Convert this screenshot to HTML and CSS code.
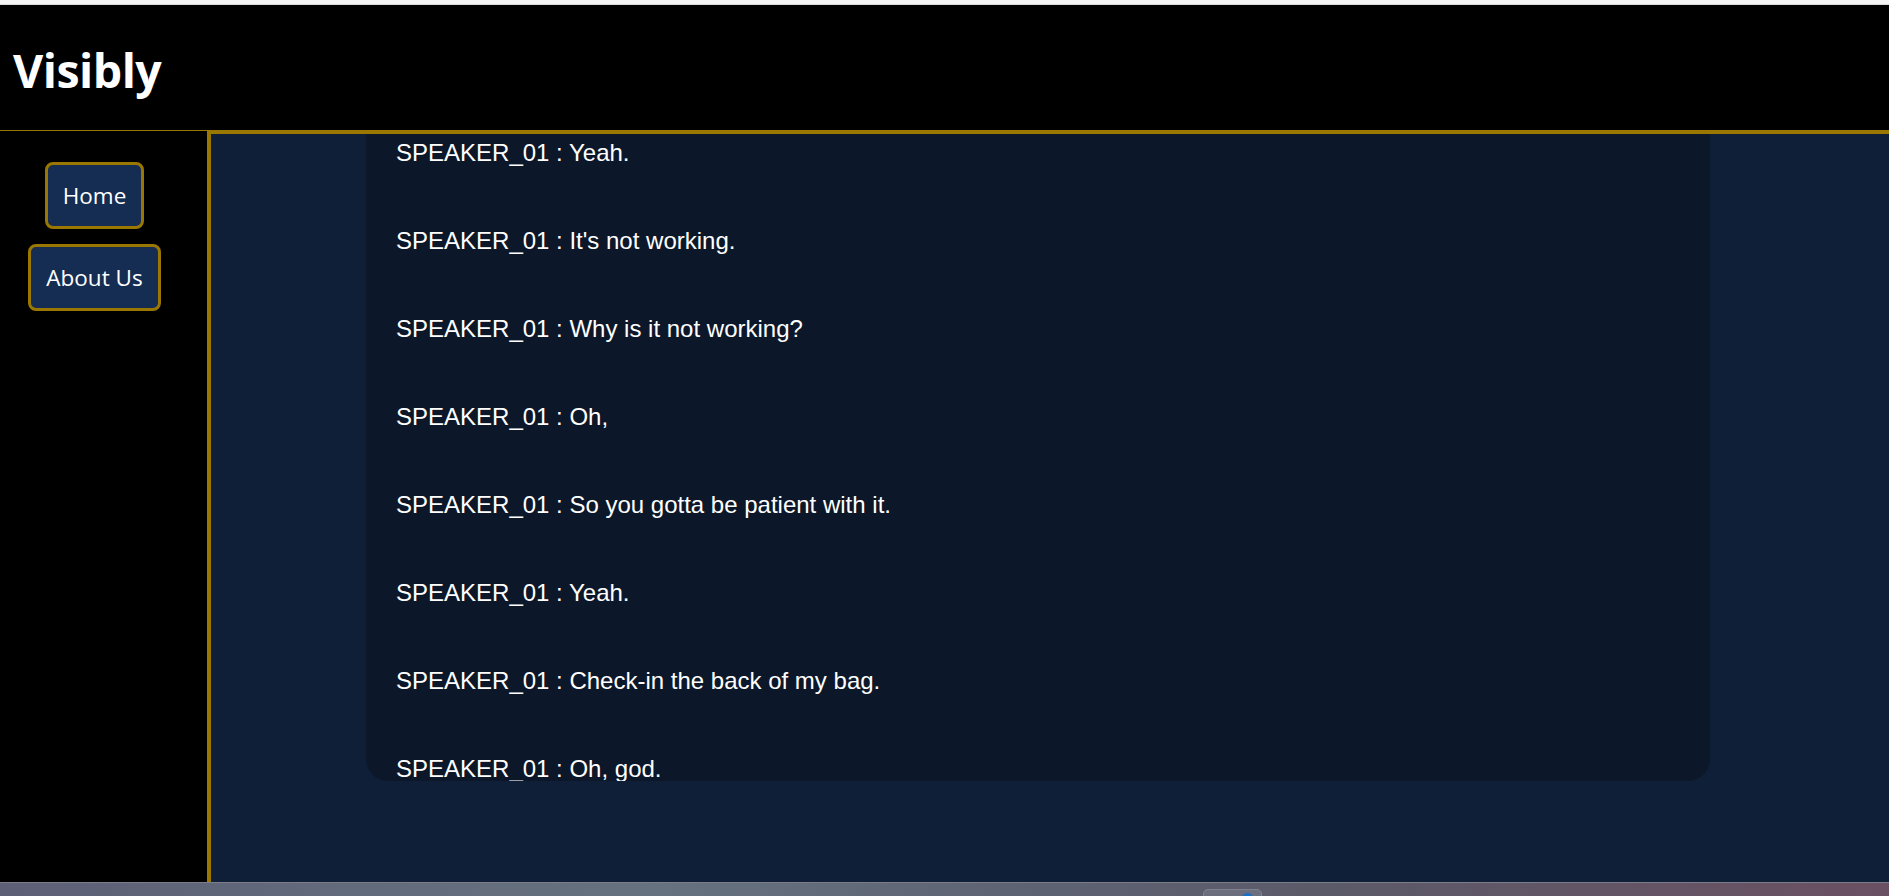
FILE: index.html
```html
<!DOCTYPE html>
<html lang="en">
<head>
<meta charset="utf-8">
<title>Visibly</title>
<link rel="stylesheet" href="styles.css">
</head>
<body>
<div class="topstrip"></div>
<header class="header">
  <h1 class="brand">Visibly</h1>
</header>
<div class="layout">
  <nav class="sidebar">
    <button class="nav-btn">Home</button>
    <button class="nav-btn">About Us</button>
  </nav>
  <main class="main">
    <section class="transcript">
      <p class="line">SPEAKER_01 : Yeah.</p>
      <p class="line">SPEAKER_01 : It's not working.</p>
      <p class="line">SPEAKER_01 : Why is it not working?</p>
      <p class="line">SPEAKER_01 : Oh,</p>
      <p class="line">SPEAKER_01 : So you gotta be patient with it.</p>
      <p class="line">SPEAKER_01 : Yeah.</p>
      <p class="line">SPEAKER_01 : Check-in the back of my bag.</p>
      <p class="line">SPEAKER_01 : Oh, god.</p>
    </section>
  </main>
</div>
<div class="taskbar">
  <div class="task-item"><span class="task-dot"></span></div>
</div>
</body>
</html>
```
FILE: styles.css
```css
html, body {
  margin: 0;
  padding: 0;
  height: 896px;
  overflow: hidden;
  background: #000;
}

.topstrip {
  height: 4px;
  background: #f4f4f4;
  border-bottom: 1px solid #d8d8d8;
}

.header {
  height: 125px;
  background: #000;
  display: flex;
  align-items: center;
  padding-left: 13px;
  box-sizing: border-box;
}

.brand {
  margin: 0;
  padding-top: 5px;
  font-family: "Open Sans", "Noto Sans", sans-serif;
  font-weight: 700;
  font-size: 46.5px;
  color: #fff;
  letter-spacing: -0.5px;
}

.layout {
  display: flex;
  height: 752px;
}

.sidebar {
  width: 207px;
  flex: none;
  box-sizing: border-box;
  border-top: 1px solid #997700;
  background: #000;
  display: flex;
  flex-direction: column;
  align-items: center;
  gap: 15px;
  padding: 31px 18px 0 0;
}

.nav-btn {
  font-family: "Open Sans", "Noto Sans", sans-serif;
  font-size: 22.5px;
  color: #fff;
  background: #152d53;
  border: 3px solid #997700;
  border-radius: 8px;
  padding: 16px 15px 15px;
  line-height: 30px;
  cursor: pointer;
}

.main {
  flex: 1;
  background: #0f1f38;
  border-top: 4px solid #997700;
  border-left: 4px solid #997700;
  padding-left: 155px;
  overflow: hidden;
}

.transcript {
  width: 1344px;
  height: 647px;
  box-sizing: border-box;
  background: #0c1829;
  border-radius: 0 0 22px 22px;
  padding: 5px 30px 0;
  overflow: hidden;
  display: flex;
  flex-direction: column;
  gap: 60px;
}

.line {
  margin: 0;
  flex: none;
  font-family: "Liberation Sans", Arial, sans-serif;
  font-size: 24px;
  line-height: 28px;
  color: #fff;
}

.taskbar {
  height: 14px;
  box-sizing: border-box;
  border-top: 1px solid #7b7e8a;
  background: linear-gradient(90deg, #5d5f76 0%, #626b7c 20%, #66727f 35%, #5d6272 55%, #5b5a69 70%, #6a5062 100%);
  position: relative;
}

.task-item {
  position: absolute;
  left: 1203px;
  top: 6px;
  width: 59px;
  height: 12px;
  box-sizing: border-box;
  border: 1px solid #80838f;
  border-radius: 5px;
  background: #6b6e7c;
}

.task-dot {
  position: absolute;
  left: 37px;
  top: 3px;
  width: 13px;
  height: 13px;
  border-radius: 50%;
  background: #1f6fc0;
}
```
